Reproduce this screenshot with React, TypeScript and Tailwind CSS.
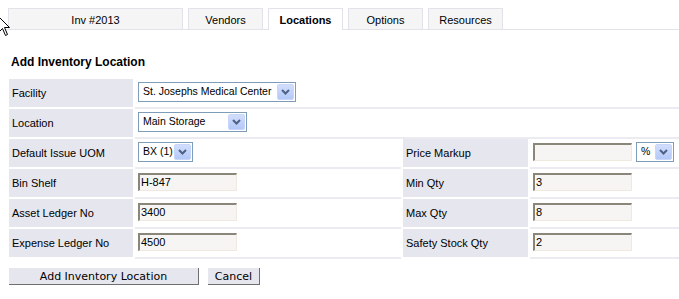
import React from 'react';

const tabs = [
  { label: 'Inv #2013', w: 'w-[175px]' },
  { label: 'Vendors', w: 'w-[75px]' },
  { label: 'Locations', w: 'w-[75px]', active: true },
  { label: 'Options', w: 'w-[75px]' },
  { label: 'Resources', w: 'w-[75px]' },
];

const Chevron = () => (
  <svg width="9" height="6" viewBox="0 0 9 6">
    <path d="M1 1 L4.5 4.5 L8 1" fill="none" stroke="#4d6185" strokeWidth="2" />
  </svg>
);

const Select = ({ text, width }: { text: string; width: string }) => (
  <div className={`${width} h-[20px] flex items-center border border-[#7f9db9] bg-white pl-[4px] pr-px`}>
    <span className="flex-1 whitespace-nowrap overflow-hidden text-[10.5px]">{text}</span>
    <div className="w-[17px] h-[16px] shrink-0 flex items-center justify-center bg-gradient-to-b from-[#d2defc] to-[#b3c9f8] border border-[#c8d6fb] rounded-[2px]">
      <Chevron />
    </div>
  </div>
);

const Field = ({ value }: { value: string }) => (
  <div className="w-[99px] h-[18px] flex items-center bg-[#f6f5f3] border-t-2 border-l-2 border-b border-r border-t-[#8a877a] border-l-[#8a877a] border-b-[#f0e9e0] border-r-[#f0e9e0] pl-px">
    {value}
  </div>
);

const Label = ({ text, w }: { text?: string; w: string }) => (
  <div className={`${w} h-[28px] flex items-center pl-[3px] bg-[#e6e6ee]`}>{text}</div>
);

const Value = ({ children, grow }: { children?: React.ReactNode; grow?: boolean }) => (
  <div className={`${grow ? 'flex-1' : 'w-[266px]'} h-[30px] pb-[2px] flex items-center gap-[4px] pl-[3px] border-b-2 border-[#ebebf1]`}>
    {children}
  </div>
);

const App = () => {
  return (
    <div className="relative w-[679px] h-[299px] bg-white overflow-hidden text-[11px] text-black font-['Liberation_Sans',Arial,sans-serif]">
      <svg className="absolute left-[-2px] top-[16px]" width="14" height="22" viewBox="0 0 14 22">
        <path d="M0.5 0.5 L0.5 16.5 L4.5 12.5 L7.5 19.5 L9.5 18.5 L6.5 11.5 L11.5 11.5 Z" fill="white" stroke="black" strokeWidth="1" />
      </svg>

      <div className="h-[30px] pt-[8px] pl-[8px] flex items-start gap-[5px] border-b border-[#e2e2ea]">
        {tabs.map((t) =>
          t.active ? (
            <div key={t.label} className={`${t.w} h-[22px] pt-[2px] flex items-center justify-center bg-white border border-b-0 border-[#e2e2ea] font-bold`}>
              {t.label}
            </div>
          ) : (
            <div key={t.label} className={`${t.w} h-[21px] pt-[2px] flex items-center justify-center bg-[#f5f5f5] border border-b-0 border-[#e2e2ea]`}>
              {t.label}
            </div>
          )
        )}
      </div>

      <div className="mt-[25px] ml-[11px] h-[14px] leading-[14px] text-[12px] font-bold">Add Inventory Location</div>

      <div className="mt-[10px] ml-[9px] flex flex-col">
        <div className="flex gap-[2px]">
          <Label text="Facility" w="w-[124px]" />
          <Value grow>
            <Select text="St. Josephs Medical Center" width="w-[158px]" />
          </Value>
        </div>
        <div className="flex gap-[2px]">
          <Label text="Location" w="w-[124px]" />
          <Value grow>
            <Select text="Main Storage" width="w-[109px]" />
          </Value>
        </div>
        <div className="flex gap-[2px]">
          <Label text="Default Issue UOM" w="w-[124px]" />
          <Value>
            <Select text="BX (1)" width="w-[55px]" />
          </Value>
          <Label text="Price Markup" w="w-[125px]" />
          <Value grow>
            <Field value="" />
            <Select text="%" width="w-[38px]" />
          </Value>
        </div>
        <div className="flex gap-[2px]">
          <Label text="Bin Shelf" w="w-[124px]" />
          <Value>
            <Field value="H-847" />
          </Value>
          <Label text="Min Qty" w="w-[125px]" />
          <Value grow>
            <Field value="3" />
          </Value>
        </div>
        <div className="flex gap-[2px]">
          <Label text="Asset Ledger No" w="w-[124px]" />
          <Value>
            <Field value="3400" />
          </Value>
          <Label text="Max Qty" w="w-[125px]" />
          <Value grow>
            <Field value="8" />
          </Value>
        </div>
        <div className="flex gap-[2px]">
          <Label text="Expense Ledger No" w="w-[124px]" />
          <Value>
            <Field value="4500" />
          </Value>
          <Label text="Safety Stock Qty" w="w-[125px]" />
          <Value grow>
            <Field value="2" />
          </Value>
        </div>
      </div>

      <div className="mt-[9px] ml-[9px] flex gap-[9px] font-['DejaVu_Sans',sans-serif]">
        <button className="w-[190px] h-[17px] leading-none bg-[#e6e6ee] border-r border-b border-[#6f6f6f]">
          Add Inventory Location
        </button>
        <button className="w-[52px] h-[17px] leading-none bg-[#e6e6ee] border-r border-b border-[#6f6f6f]">
          Cancel
        </button>
      </div>
    </div>
  );
};

export default App;
